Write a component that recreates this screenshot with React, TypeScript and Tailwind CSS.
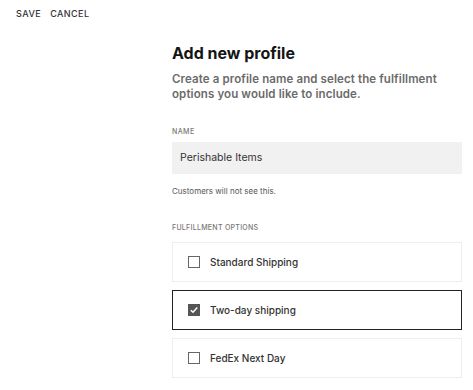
import React from "react";

function Check({ checked }: { checked?: boolean }) {
  return checked ? (
    <div className="w-[12px] h-[12px] bg-[#555] flex items-center justify-center">
      <svg width="10" height="10" viewBox="0 0 10 10">
        <path d="M1.8 5.2 L4 7.3 L8.3 2.6" fill="none" stroke="#fff" strokeWidth="1.5" />
      </svg>
    </div>
  ) : (
    <div className="w-[12px] h-[12px] border border-[#666] bg-white" />
  );
}

function Option({ label, checked }: { label: string; checked?: boolean }) {
  return (
    <div
      className={
        "h-[40px] flex items-center pl-[15px] gap-[10px] " +
        (checked ? "border border-[#222]" : "border border-[#eeeeee]")
      }
    >
      <Check checked={checked} />
      <span className="text-[10px] font-medium text-[#333] leading-none">{label}</span>
    </div>
  );
}

export default function App() {
  return (
    <div className="w-[473px] h-[390px] bg-white font-['Inter',sans-serif] overflow-hidden">
      <div className="flex gap-[9px] pl-[16px] pt-[9px] text-[9px] font-medium tracking-[0.05em] text-[#333] leading-[10px]">
        <span>SAVE</span>
        <span>CANCEL</span>
      </div>
      <div className="ml-[172px] w-[290px]">
        <h1 className="mt-[24px] text-[16px] font-bold leading-[20px] text-[#151515]">Add new profile</h1>
        <p className="mt-[9px] text-[11.5px] font-semibold leading-[15px] text-[#6b6b6b] tracking-[0.01em]">
          Create a profile name and select the fulfillment
          <br />
          options you would like to include.
        </p>
        <div className="mt-[25px] text-[7px] font-medium tracking-[0.06em] text-[#777] leading-[10px]">NAME</div>
        <div className="mt-[5px] h-[32px] bg-[#f1f1f1] flex items-center pl-[8px] text-[10.5px] text-[#333]">
          Perishable Items
        </div>
        <div className="mt-[12px] text-[8px] text-[#555] leading-[10px]">Customers will not see this.</div>
        <div className="mt-[27px] text-[7px] font-medium tracking-[0.04em] text-[#777] leading-[10px]">
          FULFILLMENT OPTIONS
        </div>
        <div className="mt-[9px] flex flex-col gap-[8px]">
          <Option label="Standard Shipping" />
          <Option label="Two-day shipping" checked />
          <Option label="FedEx Next Day" />
        </div>
      </div>
    </div>
  );
}
